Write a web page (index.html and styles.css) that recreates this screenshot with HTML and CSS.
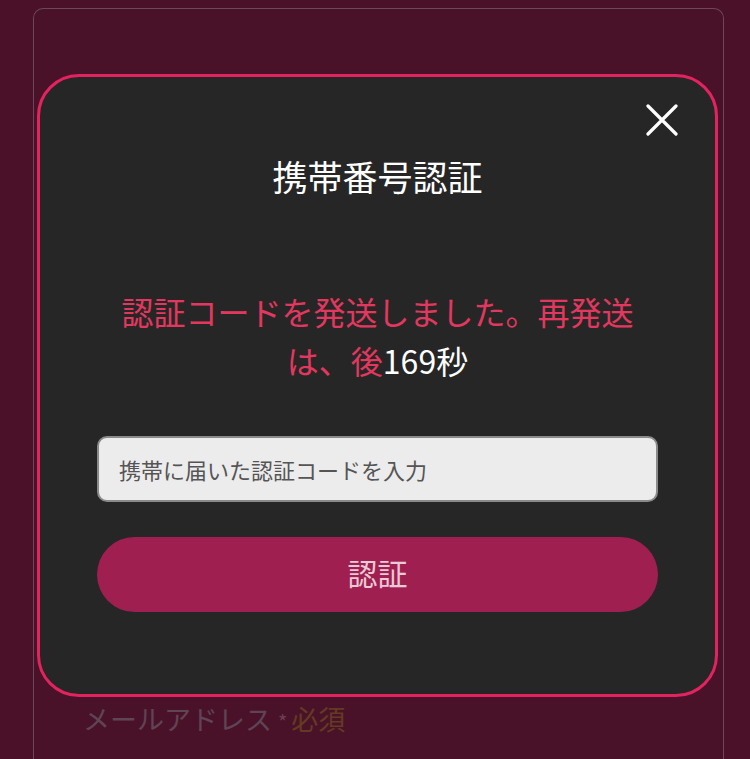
FILE: index.html
```html
<!DOCTYPE html>
<html lang="ja">
<head>
<meta charset="utf-8">
<link rel="stylesheet" href="styles.css">
</head>
<body>
<div class="page">
  <div class="card">
    <div class="field-label">メールアドレス<span class="req-dot">*</span><span class="req">必須</span></div>
  </div>
</div>
<div class="modal">
  <button class="close" aria-label="close">
    <svg width="32" height="32" viewBox="0 0 32 32"><path d="M2 2 L30 30 M30 2 L2 30" stroke="#ffffff" stroke-width="3.2" stroke-linecap="round" fill="none"/></svg>
  </button>
  <h2 class="title">携帯番号認証</h2>
  <p class="message">認証コードを発送しました。再発送は、後<span class="count">169秒</span></p>
  <input class="code-input" type="text" placeholder="携帯に届いた認証コードを入力">
  <button class="submit">認証</button>
</div>
</body>
</html>
```
FILE: styles.css
```css
html, body {
  margin: 0;
  padding: 0;
}
body {
  width: 750px;
  height: 759px;
  overflow: hidden;
  background: #4a1128;
  font-family: "Noto Sans CJK JP", "Noto Sans", sans-serif;
  position: relative;
}
.page {
  padding: 8px 26px 0 33px;
}
.card {
  height: 751px;
  border: 1px solid #6a4858;
  border-bottom: none;
  border-radius: 10px 10px 0 0;
  box-sizing: border-box;
  padding: 690px 0 0 49px;
  background: #4a1228;
}
.field-label {
  font-size: 27px;
  line-height: 40px;
  color: #5e4454;
}
.req-dot {
  color: #6a4050;
  margin: 0 4px 0 6px;
  font-size: 20px;
}
.req {
  color: #643a22;
}
.modal {
  position: absolute;
  left: 37px;
  top: 74px;
  width: 681px;
  height: 623px;
  box-sizing: border-box;
  border: 3px solid #e3235f;
  border-radius: 42px;
  background: #262626;
  padding: 74px 57px 0 57px;
  display: flex;
  flex-direction: column;
  align-items: center;
}
.close {
  position: absolute;
  right: 37px;
  top: 27px;
  width: 32px;
  height: 32px;
  padding: 0;
  border: none;
  background: transparent;
  display: flex;
}
.title {
  margin: 0;
  font-size: 35px;
  font-weight: 400;
  line-height: 50px;
  color: #ffffff;
}
.message {
  margin: 86px 0 0 0;
  width: 530px;
  text-align: center;
  font-size: 32px;
  line-height: 49px;
  color: #e2385f;
}
.count {
  color: #ffffff;
}
.code-input {
  margin-top: 51px;
  width: 100%;
  height: 66px;
  box-sizing: border-box;
  border: 2px solid #8a8a8a;
  border-radius: 10px;
  background: #ececec;
  padding: 0 20px;
  font-family: "Noto Sans CJK JP", "Noto Sans", sans-serif;
  font-size: 22px;
  color: #333;
}
.code-input::placeholder {
  color: #555555;
}
.submit {
  margin-top: 35px;
  width: 100%;
  height: 75px;
  border: none;
  border-radius: 38px;
  background: #a01f51;
  color: #e8c9d5;
  font-family: "Noto Sans CJK JP", "Noto Sans", sans-serif;
  font-size: 30px;
  padding: 0 0 5px 0;
}
```
